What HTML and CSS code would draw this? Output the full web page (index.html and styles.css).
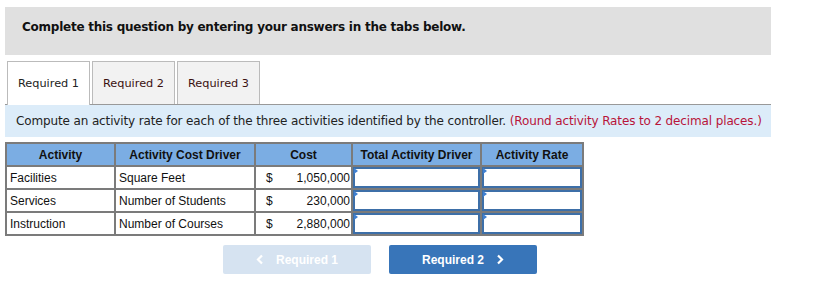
FILE: index.html
```html
<!DOCTYPE html>
<html lang="en">
<head>
    <meta charset="UTF-8">
    <title>Required 1</title>
    <link rel="stylesheet" href="styles.css">
</head>
<body>
<div class="page">
    <div class="banner">Complete this question by entering your answers in the tabs below.</div>

    <div class="tabs">
        <div class="tab active">Required 1</div>
        <div class="tab">Required 2</div>
        <div class="tab">Required 3</div>
    </div>

    <div class="prompt">
        Compute an activity rate for each of the three activities identified by the controller.
        <span class="hint">(Round activity Rates to 2 decimal places.)</span>
    </div>

    <table class="grid">
        <thead>
            <tr>
                <th class="c-act">Activity</th>
                <th class="c-drv">Activity Cost Driver</th>
                <th class="c-cost" colspan="2">Cost</th>
                <th class="c-tot">Total Activity Driver</th>
                <th class="c-rate">Activity Rate</th>
            </tr>
        </thead>
        <tbody>
            <tr>
                <td>Facilities</td>
                <td>Square Feet</td>
                <td class="cur">$</td>
                <td class="num">1,050,000</td>
                <td class="entry"><input type="text"></td>
                <td class="entry"><input type="text"></td>
            </tr>
            <tr>
                <td>Services</td>
                <td>Number of Students</td>
                <td class="cur">$</td>
                <td class="num">230,000</td>
                <td class="entry"><input type="text"></td>
                <td class="entry"><input type="text"></td>
            </tr>
            <tr>
                <td>Instruction</td>
                <td>Number of Courses</td>
                <td class="cur">$</td>
                <td class="num">2,880,000</td>
                <td class="entry"><input type="text"></td>
                <td class="entry"><input type="text"></td>
            </tr>
        </tbody>
    </table>

    <div class="nav">
        <button class="btn prev" disabled>
            <svg width="8" height="11" viewBox="0 0 8 11"><path d="M6 1.5 2 5.5 6 9.5" fill="none" stroke="#fff" stroke-width="2.2"/></svg>
            Required 1
        </button>
        <button class="btn next">
            Required 2
            <svg width="8" height="11" viewBox="0 0 8 11"><path d="M2 1.5 6 5.5 2 9.5" fill="none" stroke="#fff" stroke-width="2.2"/></svg>
        </button>
    </div>
</div>
</body>
</html>
```

FILE: styles.css
```css
body {
    margin: 0;
    background: #fff;
    font-family: 'DejaVu Sans', Verdana, sans-serif;
    color: #222;
}
.page {
    width: 766px;
    padding: 7px 0 0 5px;
}
.banner {
    background: #e0e0e0;
    height: 48px;
    box-sizing: border-box;
    padding: 13px 0 0 17px;
    font-size: 12px;
    letter-spacing: -0.25px;
    font-weight: bold;
    color: #111;
}
.tabs {
    display: flex;
    gap: 2px;
    margin: 6px 0 0 2px;
}
.tab {
    width: 83px;
    height: 43px;
    box-sizing: border-box;
    border: 1px solid #bbb;
    border-bottom: none;
    background: #f2f2f2;
    font-size: 11.3px;
    text-align: center;
    line-height: 44px;
    color: #3a1010;
}
.tab.active {
    background: #fff;
    color: #222;
    height: 44px;
    margin-bottom: -1px;
    position: relative;
}
.prompt {
    background: #dcecf9;
    border-top: 1px solid #999;
    height: 33px;
    box-sizing: border-box;
    padding: 9px 0 0 11px;
    font-size: 12px;
    letter-spacing: -0.13px;
    white-space: nowrap;
    color: #222;
}
.hint {
    color: #b8143a;
}
.grid {
    margin-top: 5px;
    border-collapse: collapse;
    font-family: 'Liberation Sans', Arial, sans-serif;
    font-size: 12px;
    color: #111;
}
.grid th,
.grid td {
    border: 2px solid #7b7b7b;
    padding: 0 3px;
}
.grid th {
    background: #7badE3;
    height: 21px;
    font-weight: bold;
    text-align: center;
}
.grid td {
    height: 21px;
}
.c-act { width: 101px; }
.c-drv { width: 132px; }
.c-cost { width: 89px; }
.c-tot { width: 121px; }
.c-rate { width: 94px; }
.grid td.cur {
    border-right: none;
    padding-left: 10px;
    width: 14px;
}
.grid td.num {
    border-left: none;
    text-align: right;
    padding-right: 1px;
}
.grid td.entry {
    padding: 0;
    position: relative;
}
.entry input {
    display: block;
    width: 100%;
    height: 21px;
    box-sizing: border-box;
    border: 2px solid #3d6fa8;
    margin: 0;
    background: #fff;
}
/* small marker in the corner of each answer box */
.entry::before {
    content: '';
    position: absolute;
    top: 1px;
    left: 1px;
    border-left: 4px solid #3f7fd0;
    border-top: 3px solid transparent;
    border-bottom: 3px solid transparent;
}
.nav {
    display: flex;
    gap: 18px;
    margin: 9px 0 0 218px;
}
.btn {
    width: 148px;
    height: 29px;
    border: none;
    border-radius: 2px;
    font-family: 'Liberation Sans', Arial, sans-serif;
    font-size: 12px;
    font-weight: bold;
    color: #fff;
    display: flex;
    align-items: center;
    justify-content: center;
    gap: 12px;
}
.btn.prev {
    background: #d6e3f1;
}
.btn.next {
    background: #3875b9;
}
```
